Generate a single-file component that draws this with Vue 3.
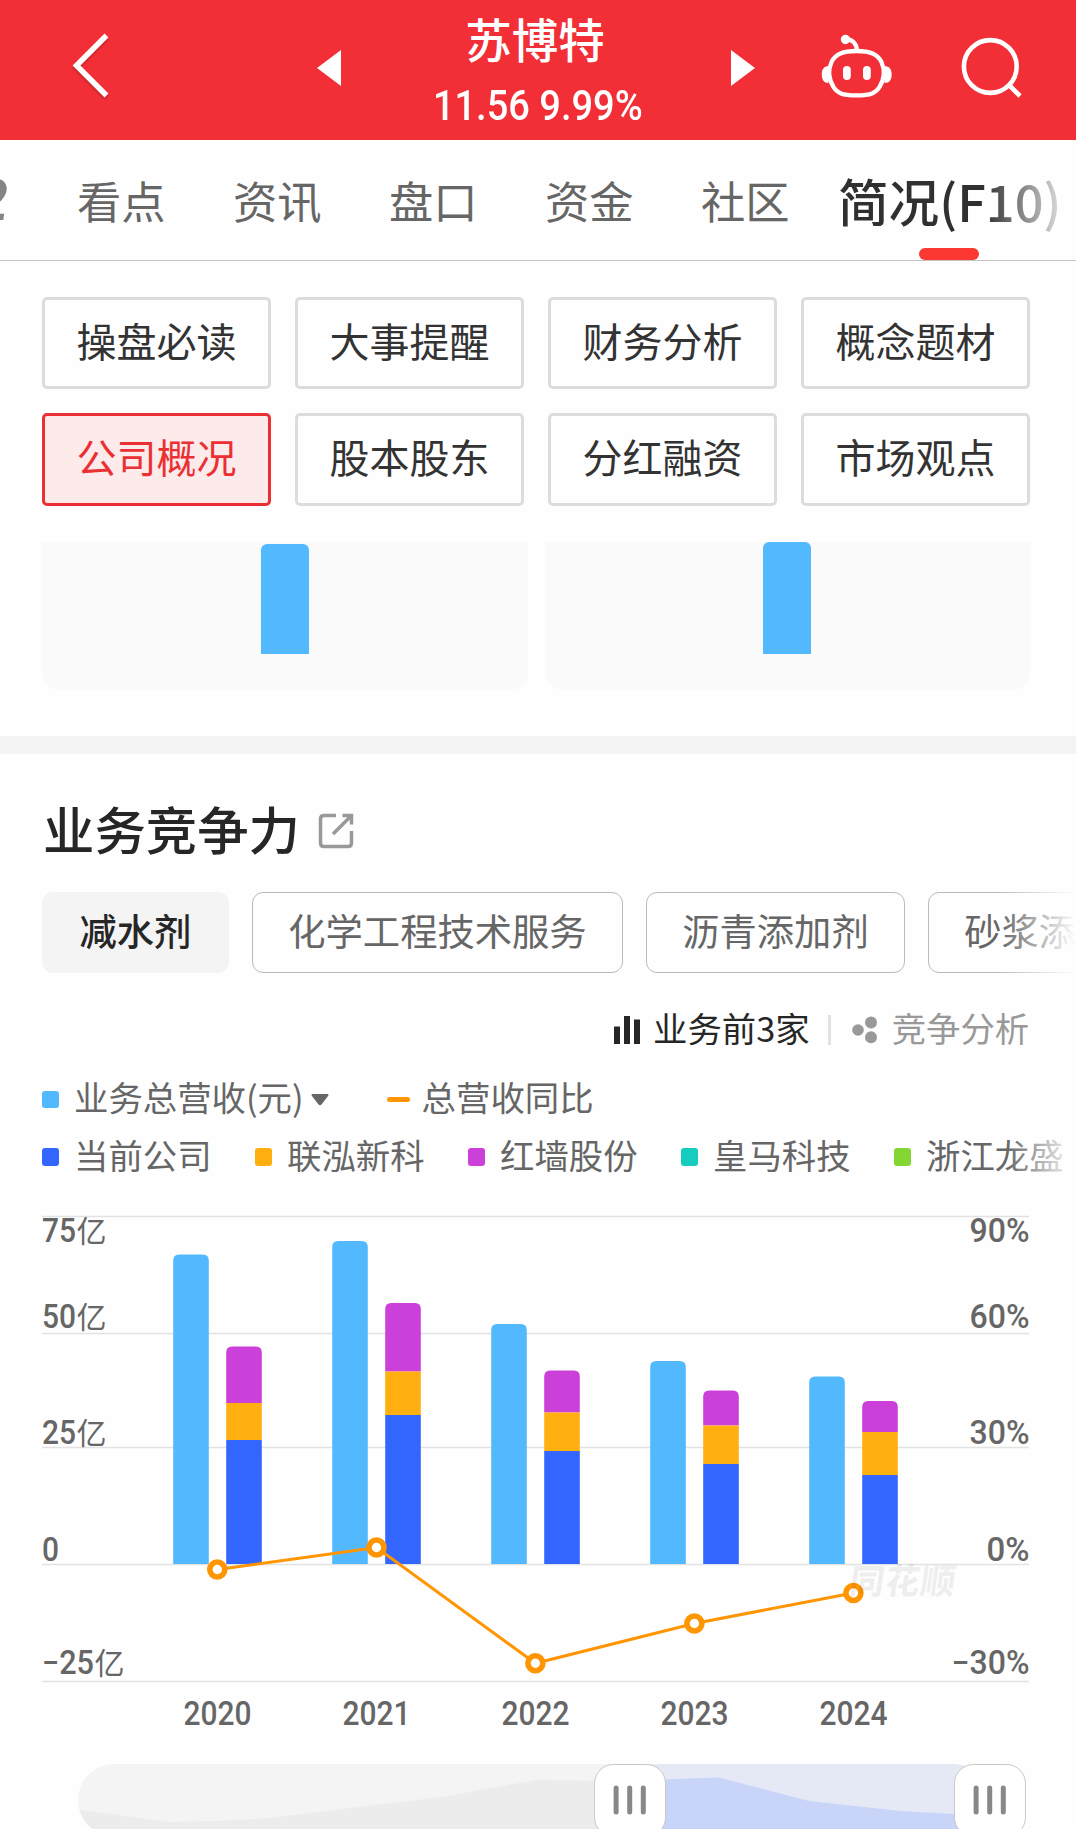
<template>
  <div class="page">
    <header class="header">
      <svg class="back" viewBox="0 0 44 72" width="44" height="72">
        <path d="M38.500 5.500 L8.500 35.500 L38.500 65.500" />
      </svg>
      <svg class="arrow" viewBox="0 0 24 36" width="24" height="36"><path d="M24 0V36L0 18Z" /></svg>
      <div class="stock">
        <div class="stock-name">苏博特</div>
        <div class="stock-price">11.56 9.99%</div>
      </div>
      <svg class="arrow" viewBox="0 0 24 36" width="24" height="36"><path d="M0 0V36L24 18Z" /></svg>
      <svg class="robot" viewBox="0 0 72 66" width="72" height="66">
        <path class="line" d="M36.500 19C50 19 57.500 22 61.500 30C65 38 64.500 47 59.500 55C56 61 51 63.300 36.500 63.300C22 63.300 17 61 13.500 55C8.500 47 8 38 11.500 30C15.500 22 23 19 36.500 19Z" />
        <path class="line" d="M26 7C32 7.500 36.500 11 36.800 18" />
        <circle cx="25.500" cy="7.500" r="4.700" />
        <path d="M8.500 34C4 34 1.800 37.500 1.800 42.500C1.800 47.500 4 51 8.500 51ZM64.500 34C69.500 34 71.700 37.500 71.700 42.500C71.700 47.500 69.500 51 64.500 51Z" />
        <rect x="23" y="34" width="7.800" height="14" rx="3.900" />
        <rect x="43" y="34" width="7.800" height="14" rx="3.900" />
      </svg>
      <svg class="search" viewBox="0 0 62 62" width="62" height="62">
        <circle cx="30.300" cy="30.500" r="26.400" />
        <path d="M49 49L60 60" />
      </svg>
    </header>

    <nav class="tabs">
      <span class="tab-cut">2</span>
      <span v-for="tab in tabs" :key="tab" class="tab">{{ tab }}</span>
      <span class="tab active">简况(F10)</span>
    </nav>

    <div class="menu">
      <div v-for="item in menus" :key="item" class="menu-item" :class="{ active: item === currentMenu }">{{ item }}</div>
    </div>

    <div class="cards">
      <div class="card"><i class="card-bar"></i></div>
      <div class="card"><i class="card-bar tall"></i></div>
    </div>
    <div class="divider"></div>

    <section class="business">
      <h2 class="title">
        <span>业务竞争力</span>
        <svg viewBox="0 0 36 36" width="36" height="36">
          <path d="M18 2.500H6Q2.500 2.500 2.500 6V30Q2.500 33.500 6 33.500H30Q33.500 33.500 33.500 30V18M15 21L33 3M24.500 2.500H33.500V11.500" />
        </svg>
      </h2>

      <div class="chips">
        <span v-for="(chip, i) in chips" :key="chip" class="chip" :class="{ active: i === 0 }">{{ chip }}</span>
      </div>

      <div class="switch">
        <svg viewBox="0 0 26 28" width="26" height="28">
          <path d="M0 10.500H6V28H0ZM10 0H16V28H10ZM20 3.500H26V28H20Z" fill="#262626" />
        </svg>
        <span class="switch-on">业务前3家</span>
        <i class="switch-line"></i>
        <svg viewBox="0 0 26 28" width="26" height="28">
          <g fill="#999">
            <circle cx="6" cy="14" r="5.800" />
            <circle cx="19" cy="6.500" r="6" />
            <circle cx="19" cy="21.300" r="6" />
          </g>
        </svg>
        <span class="switch-off">竞争分析</span>
      </div>

      <div class="legend">
        <i class="dot" style="background: #52b9ff"></i>
        <span>业务总营收(元)</span>
        <svg class="caret" viewBox="0 0 18 12" width="18" height="12"><path d="M2 0H16Q18.500 0 17 2L10.500 10.500Q9 12 7.500 10.500L1 2Q-.5 0 2 0Z" /></svg>
        <i class="dash"></i>
        <span>总营收同比</span>
      </div>
      <div class="legend companies">
        <div v-for="c in companies" :key="c.name" class="company">
          <i class="dot" :style="{ background: c.color }"></i>
          <span>{{ c.name }}</span>
        </div>
      </div>

      <svg class="chart" viewBox="0 1200 1076 550" width="1076" height="550">
        <line v-for="y in gridLines" :key="y" class="grid" x1="42" x2="1029" :y1="y" :y2="y" />

        <g v-for="(b, i) in bars" :key="b.year">
          <path :d="roundBar(173.2 + i * 159, b.total, 1564)" fill="#52b9ff" />
          <path :d="roundBar(226.2 + i * 159, b.purple, b.orange)" fill="#cb40d9" />
          <rect :x="226.2 + i * 159" :y="b.orange" width="35.600" :height="b.blue - b.orange" fill="#ffaf10" />
          <rect :x="226.2 + i * 159" :y="b.blue" width="35.600" :height="1564 - b.blue" fill="#3366ff" />
          <text :x="183.500 + i * 159" y="1725" textLength="68" lengthAdjust="spacingAndGlyphs">{{ b.year }}</text>
        </g>

        <g v-for="l in axis" :key="l.y">
          <text x="42" :y="l.y" :textLength="l.lw" lengthAdjust="spacingAndGlyphs">{{ l.left }}</text>
          <text v-if="l.left !== '0'" class="unit" :x="42.5 + l.lw" :y="l.y">亿</text>
          <text :x="1029.500 - l.rw" :y="l.y" :textLength="l.rw" lengthAdjust="spacingAndGlyphs">{{ l.right }}</text>
        </g>

        <polyline class="trend" :points="trendPoints" />
        <circle v-for="p in trend" :key="p[0]" class="point" :cx="p[0]" :cy="p[1]" r="7.500" />
        <text class="watermark" x="0" y="0" transform="translate(848 1594) skewX(-8)" textLength="106">同花顺</text>
      </svg>

      <svg class="slider" viewBox="0 1750 1076 79" width="1076" height="79">
        <defs>
          <clipPath id="track"><rect x="78" y="1764" width="912" height="72" rx="36" /></clipPath>
        </defs>
        <g clip-path="url(#track)">
          <rect x="78" y="1764" width="552" height="72" fill="#f4f4f4" />
          <path d="M78 1809.500L168 1822L216 1821L265 1818.500L350 1808L442 1797L536 1780L630 1781V1836H78Z" fill="#ececec" />
          <rect x="630" y="1764" width="360" height="72" fill="#e5e9f6" />
          <path d="M630 1780.500L719 1777.500L809 1801L900 1811L990 1816V1836H630Z" fill="#c8d4f8" />
        </g>
        <g v-for="x in [594.5, 954.5]" :key="x">
          <rect class="handle" :x="x" y="1764.500" width="71" height="72" rx="19" />
          <rect v-for="n in 3" :key="n" :x="x + 5.500 + n * 13.600" y="1785.500" width="5" height="29" rx="2.500" fill="#888" />
        </g>
      </svg>
    </section>
  </div>
</template>

<script setup>
import { ref, computed } from 'vue'

const tabs = ['看点', '资讯', '盘口', '资金', '社区']
const menus = ['操盘必读', '大事提醒', '财务分析', '概念题材', '公司概况', '股本股东', '分红融资', '市场观点']
const currentMenu = ref('公司概况')
const chips = ['减水剂', '化学工程技术服务', '沥青添加剂', '砂浆添加剂']

const companies = [
  { name: '当前公司', color: '#3366ff' },
  { name: '联泓新科', color: '#ffaf10' },
  { name: '红墙股份', color: '#cb40d9' },
  { name: '皇马科技', color: '#14cdbf' },
  { name: '浙江龙盛', color: '#84d635' }
]

// 图表坐标
const gridLines = [1216.5, 1333.5, 1447.5, 1564.5, 1681.5]
const bars = [
  { year: '2020', total: 1254.5, purple: 1346.5, orange: 1403, blue: 1440 },
  { year: '2021', total: 1241, purple: 1303, orange: 1371.5, blue: 1415 },
  { year: '2022', total: 1324, purple: 1370.5, orange: 1412.5, blue: 1451 },
  { year: '2023', total: 1361, purple: 1390.5, orange: 1425.5, blue: 1464 },
  { year: '2024', total: 1376.5, purple: 1401, orange: 1432, blue: 1475 }
]
const axis = [
  { y: 1242, left: '75', lw: 34, right: '90%', rw: 60 },
  { y: 1328, left: '50', lw: 34, right: '60%', rw: 60 },
  { y: 1444, left: '25', lw: 34, right: '30%', rw: 60 },
  { y: 1561, left: '0', lw: 17, right: '0%', rw: 43 },
  { y: 1674, left: '−25', lw: 52, right: '−30%', rw: 78 }
]
const trend = [[217.3, 1569.5], [376.5, 1547.5], [535.4, 1663.3], [694.4, 1623.5], [853.4, 1593]]
const trendPoints = computed(() => trend.map((p) => p.join(',')).join(' '))

// 顶部圆角的柱子
const roundBar = (x, top, bottom) => {
  const right = x + 35.6
  return `M${x} ${bottom}V${top + 6}Q${x} ${top} ${x + 6} ${top}H${right - 6}Q${right} ${top} ${right} ${top + 6}V${bottom}Z`
}
</script>

<style>
body {
  background: #fff;
}
</style>

<style scoped>
.page {
  width: 1076px;
  height: 1829px;
  overflow: hidden;
  background: #fefefe;
  color: #333;
  font-family: "Noto Sans CJK SC", sans-serif;
}

.page svg {
  display: block;
  flex: none;
}

/* 顶部导航 */
.header {
  display: flex;
  height: 140px;
  background: #f22f37;
  color: #fff;
  fill: #fff;
}

.back {
  margin: 30px 0 0 68px;
  fill: none;
  stroke: #fff;
  stroke-width: 5.5;
  filter: drop-shadow(0 2px 1px rgba(0, 0, 0, 0.2));
}

.arrow {
  margin-top: 50px;
}

.back + .arrow {
  margin-left: 205px;
}

.stock {
  width: 390px;
  text-align: center;
}

.stock-name {
  height: 81px;
  margin-left: -2px;
  font-size: 46.5px;
  font-weight: 500;
  line-height: 75px;
}

.stock-price {
  padding-left: 4px;
  font-family: Roboto, sans-serif;
  font-size: 42px;
  font-weight: 500;
  line-height: 50px;
  white-space: nowrap;
  transform: scaleX(0.905);
}

.robot {
  margin: 32px 0 0 65px;
}

.robot .line {
  fill: none;
  stroke: #fff;
  stroke-width: 4.3;
}

.search {
  margin: 36px 0 0 68px;
  fill: none;
  stroke: #fff;
  stroke-width: 4.6;
}

/* 标签栏 */
.tabs {
  position: relative;
  display: flex;
  height: 120px;
  border-bottom: 1px solid #c4c4c4;
  line-height: 120px;
  white-space: nowrap;
}

.tabs::after {
  content: "";
  position: absolute;
  top: 0;
  right: 0;
  width: 92px;
  height: 105px;
  background: linear-gradient(to right, rgba(254, 254, 254, 0), #fefefe);
}

.tab-cut {
  display: flex;
  justify-content: flex-end;
  width: 8px;
  margin-right: 69px;
  color: #858585;
  font-family: Roboto, sans-serif;
  font-size: 58px;
  font-style: italic;
  font-weight: 700;
}

.tab {
  width: 156px;
  color: #666;
  font-size: 44.3px;
}

.tab.active {
  position: relative;
  width: 220px;
  margin-left: -19px;
  color: #303030;
  font-size: 50.6px;
  font-weight: 500;
}

.tab.active::after {
  content: "";
  position: absolute;
  left: 81px;
  bottom: 0;
  width: 60px;
  height: 12px;
  border-radius: 6px;
  background: #fb3932;
}

/* 菜单按钮 */
.menu {
  display: grid;
  grid-template-columns: repeat(4, 1fr);
  grid-template-rows: 92px 93px;
  gap: 24px;
  padding: 36px 46px 36px 42px;
}

.menu-item {
  border: 3px solid #dcdcdc;
  border-radius: 5px;
  box-sizing: border-box;
  font-size: 40px;
  line-height: 80px;
  text-align: center;
}

.menu-item.active {
  border-color: #eb3033;
  background: #fdeaea;
  color: #eb3033;
}

.cards {
  display: flex;
  gap: 17px;
  height: 148px;
  padding: 0 46px 46px 42px;
}

.card {
  flex: 1;
  padding: 2px 0 0 219.3px;
  border-radius: 0 0 18px 18px;
  background: #fafafa;
}

.card + .card {
  padding: 0 0 0 218px;
}

.card-bar {
  display: block;
  width: 48px;
  height: 110px;
  border-radius: 6px 6px 0 0;
  background: #52b9ff;
}

.card-bar.tall {
  height: 112px;
}

.divider {
  height: 18px;
  background: #f4f4f4;
}

/* 业务竞争力 */
.title {
  display: flex;
  align-items: center;
  gap: 18px;
  height: 78px;
  margin: 38px 0 0 43px;
  color: #262626;
  font-size: 51.4px;
  font-weight: 500;
}

.title span {
  height: 78px;
  line-height: 72px;
}

.title svg {
  fill: none;
  stroke: #999;
  stroke-width: 3.5;
}

.chips {
  position: relative;
  display: flex;
  gap: 23.2px;
  margin-top: 22px;
  padding-left: 42px;
  overflow: hidden;
}

.chips::after {
  content: "";
  position: absolute;
  top: 0;
  right: 0;
  width: 76px;
  height: 81px;
  background: linear-gradient(to right, rgba(254, 254, 254, 0), #fefefe);
}

.chip {
  flex: none;
  height: 79px;
  padding: 0 35.2px;
  border: 1px solid #bbb;
  border-radius: 11px;
  color: #666;
  font-size: 37.3px;
  line-height: 74px;
}

.chip.active {
  padding: 0 36.5px;
  border-color: #f4f4f4;
  background: #f4f4f4;
  color: #262626;
  font-weight: 500;
}

.switch {
  display: flex;
  align-items: center;
  height: 50px;
  margin-top: 32px;
  padding-left: 614px;
  font-size: 34.4px;
  white-space: nowrap;
}

.switch span {
  height: 50px;
  line-height: 45px;
}

.switch-on {
  margin-left: 13px;
  color: #262626;
}

.switch-line {
  width: 3px;
  height: 30px;
  margin: 0 21px 0 18px;
  background: #e2e2e2;
}

.switch-off {
  margin-left: 14px;
  color: #999;
}

.legend {
  display: flex;
  align-items: center;
  height: 57px;
  margin-top: 16px;
  padding-left: 42px;
  color: #666;
  font-size: 34.4px;
  white-space: nowrap;
}

.legend span {
  height: 57px;
  line-height: 51px;
}

.dot {
  flex: none;
  width: 17px;
  height: 17px;
  margin-right: 15px;
  border-radius: 3px;
}

.companies .dot {
  height: 18px;
}

.caret {
  margin: 1px 0 0 7px;
  fill: #666;
}

.dash {
  width: 23px;
  height: 5px;
  margin: 0 12px 0 58px;
  border-radius: 3px;
  background: #ff9500;
}

.companies {
  position: relative;
  margin-top: 0;
}

.companies span {
  line-height: 52px;
}

.companies::after {
  content: "";
  position: absolute;
  top: 0;
  right: 0;
  width: 70px;
  height: 57px;
  background: linear-gradient(to right, rgba(254, 254, 254, 0), #fefefe);
}

.company {
  display: flex;
  align-items: center;
  flex: none;
  width: 213px;
}

/* 图表 */
.chart {
  margin-top: 15px;
  fill: #666;
  font-family: Roboto, "Noto Sans CJK SC", sans-serif;
  font-size: 32.8px;
  font-weight: 500;
}

.grid {
  stroke: #e2e2e2;
  stroke-width: 1.5;
}

.unit {
  font-family: "Noto Sans CJK SC", sans-serif;
  font-size: 30px;
  font-weight: 400;
}

.trend {
  fill: none;
  stroke: #ff9500;
  stroke-width: 3;
}

.point {
  fill: #fff;
  stroke: #ff9500;
  stroke-width: 5.6;
}

.watermark {
  fill: rgba(0, 0, 0, 0.06);
  font-family: "Noto Sans CJK SC", sans-serif;
  font-size: 35px;
  font-weight: 900;
}

.handle {
  fill: #fff;
  stroke: #c8c8c8;
  stroke-width: 1;
}
</style>
